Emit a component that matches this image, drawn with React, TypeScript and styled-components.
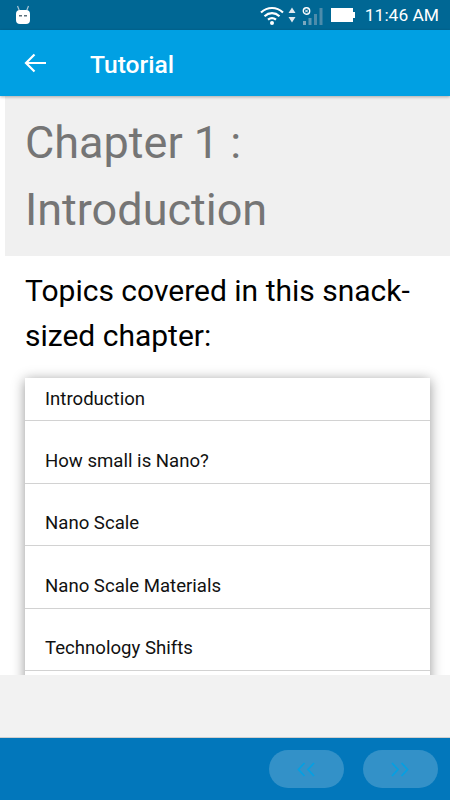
import styled, { createGlobalStyle } from "styled-components";

const GlobalStyle = createGlobalStyle`
  html, body {
    margin: 0;
    padding: 0;
  }
  body {
    font-family: Roboto, "Liberation Sans", sans-serif;
    background: #fff;
  }
`;

const topics = [
  "Introduction",
  "How small is Nano?",
  "Nano Scale",
  "Nano Scale Materials",
  "Technology Shifts",
];

const Screen = styled.div`
  width: 450px;
  height: 800px;
  display: flex;
  flex-direction: column;
  overflow: hidden;
`;

const StatusBar = styled.div`
  height: 30px;
  flex: none;
  display: flex;
  align-items: center;
  justify-content: space-between;
  padding: 0 11px 0 15px;
  background: #006794;
`;

const StatusRight = styled.div`
  display: flex;
  align-items: center;
`;

const Clock = styled.span`
  margin-left: 10px;
  color: #fff;
  font-size: 17.4px;
  line-height: 30px;
`;

const AppBar = styled.div`
  height: 66px;
  flex: none;
  display: flex;
  align-items: center;
  padding-left: 24px;
  background: #00a0e3;
  box-shadow: 0 1px 3px rgba(0, 0, 0, 0.3);
  position: relative;
  z-index: 2;
`;

const Title = styled.h1`
  margin: 2px 0 0 43px;
  color: #fff;
  font-size: 24.6px;
  font-weight: 500;
`;

const Content = styled.div`
  height: 579px;
  flex: none;
  overflow: hidden;
  background: #fff;
`;

const ChapterHeader = styled.div`
  margin-left: 5px;
  height: 160px;
  padding: 13px 0 0 20px;
  box-sizing: border-box;
  background: #f0f0f0;
  color: #757575;
  font-size: 45px;
  line-height: 67px;
`;

const Lead = styled.p`
  margin: 0;
  padding: 12px 25px 0;
  color: #000;
  font-size: 30px;
  line-height: 45px;
`;

const TopicCard = styled.ul`
  list-style: none;
  margin: 20px 20px 0 25px;
  padding: 0;
  background: #fff;
  box-shadow: 0 2px 12px rgba(0, 0, 0, 0.42);
`;

const TopicRow = styled.li<{ $first?: boolean }>`
  height: ${(p) => (p.$first ? "43px" : "62.5px")};
  padding: ${(p) => (p.$first ? "9px" : "27.5px")} 20px 0;
  box-sizing: border-box;
  border-bottom: 1px solid #d2d2d2;
  color: #111;
  font-size: 18.6px;
  line-height: 24px;
`;

const Spacer = styled.div`
  height: 63px;
  flex: none;
  background: #f2f2f2;
  border-bottom: 1px solid #cfcfcf;
  box-sizing: border-box;
`;

const Footer = styled.div`
  flex: 1;
  display: flex;
  justify-content: flex-end;
  align-items: flex-start;
  gap: 19px;
  padding: 12px 12.500px 0 0;
  background: #0277bb;
`;

const NavButton = styled.button`
  width: 75px;
  height: 38px;
  padding: 0;
  border: none;
  border-radius: 19px;
  background: #3391c8;
  display: flex;
  align-items: center;
  justify-content: center;
`;

const Chevrons = ({ flip }: { flip?: boolean }) => (
  <svg width="18" height="15" viewBox="0 0 18 15" fill="none" stroke="#05a0e2" strokeWidth="1.800">
    <g transform={flip ? "matrix(-1 0 0 1 18 0)" : undefined}>
      <path d="M7.500 1 1.500 7.500l6 6.500" />
      <path d="M17 1l-6 6.500 6 6.500" />
    </g>
  </svg>
);

const App = () => (
  <>
    <GlobalStyle />
    <Screen>
      <StatusBar>
        <svg width="16" height="20" viewBox="0 0 16 20">
          <path d="M2.500 1 4.500 6M13.500 1l-2 5" stroke="#a9c6d6" strokeWidth="1.200" />
          <rect x="1" y="5" width="14" height="14" rx="4" fill="#fff" />
          <rect x="4" y="10" width="3" height="1.500" fill="#5b6f7a" />
          <rect x="9" y="10" width="3" height="1.500" fill="#5b6f7a" />
        </svg>
        <StatusRight>
          <svg width="24" height="20" viewBox="0 0 24 20" fill="none" stroke="#fff" strokeWidth="2.200">
            <path d="M1 7.500C7.500 1.500 16.500 1.500 23 7.500" />
            <path d="M4.500 11.200c4.500-4 10.500-4 15 0" />
            <path d="M8 14.700c2.400-2 5.600-2 8 0" />
            <circle cx="12" cy="18" r="2" fill="#fff" stroke="none" />
          </svg>
          <svg width="8" height="18" viewBox="0 0 8 18" style={{ marginLeft: 4 }}>
            <path d="M4 1.500 7.500 7H.5zM4 16.500.5 11h7z" fill="#dfe9ef" />
          </svg>
          <svg width="22" height="20" viewBox="0 0 22 20" style={{ marginLeft: 6 }}>
            <rect x="1" y="16" width="3" height="4" fill="#7aa8bf" />
            <rect x="6.500" y="13" width="3" height="7" fill="#5c97b4" />
            <rect x="12" y="9" width="3" height="11" fill="#4d8cab" />
            <rect x="17.500" y="3" width="3" height="17" fill="#4d8cab" />
            <circle cx="4.500" cy="6" r="3.200" fill="none" stroke="#fff" strokeWidth="1.400" />
            <path d="M3 4.500l3 3M6 4.500l-3 3" stroke="#fff" strokeWidth="1" />
          </svg>
          <svg width="24" height="14" viewBox="0 0 24 14" style={{ marginLeft: 7 }}>
            <rect x="0" y="0" width="22" height="14" fill="#fff" />
            <rect x="22" y="4" width="2" height="6" fill="#fff" />
          </svg>
          <Clock>11:46 AM</Clock>
        </StatusRight>
      </StatusBar>
      <AppBar>
        <svg width="23" height="20" viewBox="0 0 23 20" fill="none" stroke="#fff" strokeWidth="2.200">
          <path d="M22 10H2M10.500 1.500 2 10l8.500 8.500" />
        </svg>
        <Title>Tutorial</Title>
      </AppBar>
      <Content>
        <ChapterHeader>
          Chapter 1 :
          <br />
          Introduction
        </ChapterHeader>
        <Lead>Topics covered in this snack-sized chapter:</Lead>
        <TopicCard>
          {topics.map((topic, i) => (
            <TopicRow key={topic} $first={i === 0}>
              {topic}
            </TopicRow>
          ))}
          <TopicRow />
        </TopicCard>
      </Content>
      <Spacer />
      <Footer>
        <NavButton aria-label="Previous">
          <Chevrons />
        </NavButton>
        <NavButton aria-label="Next">
          <Chevrons flip />
        </NavButton>
      </Footer>
    </Screen>
  </>
);

export default App;
